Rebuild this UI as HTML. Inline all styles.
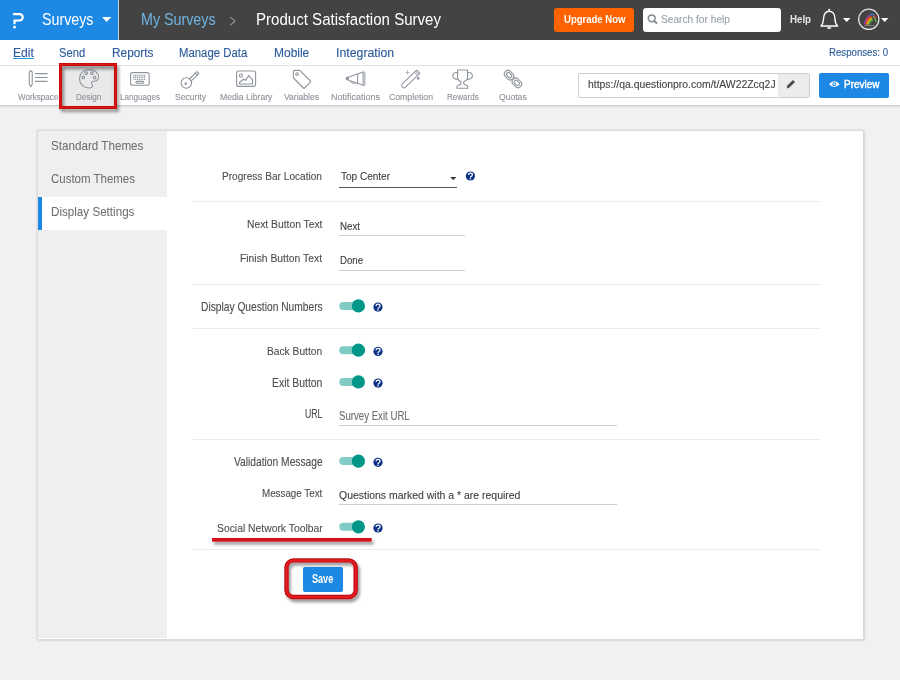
<!DOCTYPE html>
<html><head><meta charset="utf-8">
<style>
*{margin:0;padding:0;box-sizing:border-box}
html,body{width:900px;height:680px;overflow:hidden;background:#f1f1f1;font-family:"Liberation Sans",sans-serif}
body{position:relative}
.a{position:absolute}
.t{position:absolute;white-space:nowrap;transform-origin:0 0}
svg{position:absolute;left:0;top:0}
</style></head><body>
<!-- header -->
<div class="a" style="left:0;top:0;width:900px;height:40px;background:#434343"></div>
<div class="a" style="left:0;top:0;width:118px;height:40px;background:#1e88e5"></div>
<div class="a" style="left:118px;top:0;width:1px;height:40px;background:#c9d6e2"></div>
<div class="a" style="left:554px;top:8px;width:80px;height:24px;background:#ff6200;border-radius:3px"></div>
<div class="a" style="left:642.5px;top:8px;width:138.5px;height:24px;background:#fff;border-radius:3px"></div>
<!-- nav -->
<div class="a" style="left:0;top:40px;width:900px;height:26px;background:#fff;border-bottom:1px solid #e3e3e3"></div>
<div class="a" style="left:13px;top:58px;width:21px;height:1px;background:#1e9be0"></div>
<!-- toolbar -->
<div class="a" style="left:0;top:66px;width:900px;height:40px;background:#fff;border-bottom:1px solid #cdcdcd;box-shadow:0 1px 2px rgba(0,0,0,.1)"></div>
<div class="a" style="left:62px;top:66px;width:52px;height:40px;background:#e9e9e9;box-shadow:inset 0 3px 5px rgba(0,0,0,.12)"></div>
<div class="a" style="left:578px;top:72.5px;width:232px;height:25px;border:1px solid #cfcfcf;border-radius:2px;background:#fff"></div>
<div class="a" style="left:778px;top:73.5px;width:31px;height:23px;background:#ececec"></div>
<div class="a" style="left:818.5px;top:72.5px;width:70px;height:25px;background:#1e88e5;border-radius:2px"></div>
<!-- card -->
<div class="a" style="left:37px;top:130px;width:827px;height:510px;background:#fff;border:1px solid #dadada;box-shadow:0 0 2px rgba(0,0,0,.12),1px 1px 2px rgba(0,0,0,.08)"></div>
<div class="a" style="left:38px;top:131px;width:129px;height:507px;background:#efefef"></div>
<div class="a" style="left:38px;top:197px;width:129px;height:32.5px;background:#fff"></div>
<div class="a" style="left:38px;top:197px;width:4px;height:32.5px;background:#1e88e5"></div>
<!-- dividers -->
<div class="a" style="left:193px;top:201px;width:628px;height:1px;background:#ececec"></div>
<div class="a" style="left:193px;top:283.5px;width:628px;height:1px;background:#ececec"></div>
<div class="a" style="left:193px;top:328px;width:628px;height:1px;background:#ececec"></div>
<div class="a" style="left:193px;top:438.5px;width:628px;height:1px;background:#ececec"></div>
<div class="a" style="left:193px;top:549px;width:628px;height:1px;background:#ececec"></div>
<!-- field underlines -->
<div class="a" style="left:339px;top:186.8px;width:118px;height:1.5px;background:#555"></div>
<div class="a" style="left:339px;top:235px;width:125.5px;height:1px;background:#cfcfcf"></div>
<div class="a" style="left:339px;top:269.5px;width:125.5px;height:1px;background:#cfcfcf"></div>
<div class="a" style="left:339px;top:425px;width:278px;height:1px;background:#cfcfcf"></div>
<div class="a" style="left:339px;top:504px;width:278px;height:1px;background:#cfcfcf"></div>
<!-- save -->
<div class="a" style="left:302.5px;top:567px;width:40px;height:24.5px;background:#1e88e5;border-radius:2px"></div>

<div class="t" style="left:41.60px;top:10.00px;font-size:16.57px;line-height:19px;color:#ffffff;-webkit-text-stroke:0px currentColor;transform:scaleX(0.859);">Surveys</div>
<div class="t" style="left:140.70px;top:10.00px;font-size:16.57px;line-height:19px;color:#6fb5e6;-webkit-text-stroke:0px currentColor;transform:scaleX(0.862);">My Surveys</div>
<div class="t" style="left:256.20px;top:10.00px;font-size:16.13px;line-height:18px;color:#ffffff;-webkit-text-stroke:0px currentColor;transform:scaleX(0.935);">Product Satisfaction Survey</div>
<div class="t" style="left:563.60px;top:13.00px;font-size:10.97px;line-height:12px;color:#ffffff;font-weight:bold;-webkit-text-stroke:0px currentColor;transform:scaleX(0.868);">Upgrade Now</div>
<div class="t" style="left:661.00px;top:13.00px;font-size:10.97px;line-height:12px;color:#98a0a8;-webkit-text-stroke:0.12px currentColor;transform:scaleX(0.927);">Search for help</div>
<div class="t" style="left:790.00px;top:13.00px;font-size:10.97px;line-height:12px;color:#e6e6e6;font-weight:bold;-webkit-text-stroke:0px currentColor;transform:scaleX(0.883);">Help</div>
<div class="t" style="left:12.90px;top:46.00px;font-size:12.28px;line-height:14px;color:#2c5b9a;-webkit-text-stroke:0.12px currentColor;transform:scaleX(0.988);">Edit</div>
<div class="t" style="left:59.30px;top:46.00px;font-size:12.28px;line-height:14px;color:#2c5b9a;-webkit-text-stroke:0.12px currentColor;transform:scaleX(0.917);">Send</div>
<div class="t" style="left:111.80px;top:46.00px;font-size:12.28px;line-height:14px;color:#2c5b9a;-webkit-text-stroke:0.12px currentColor;transform:scaleX(0.965);">Reports</div>
<div class="t" style="left:178.90px;top:46.00px;font-size:12.28px;line-height:14px;color:#2c5b9a;-webkit-text-stroke:0.12px currentColor;transform:scaleX(0.926);">Manage Data</div>
<div class="t" style="left:273.60px;top:46.00px;font-size:12.28px;line-height:14px;color:#2c5b9a;-webkit-text-stroke:0.12px currentColor;transform:scaleX(0.976);">Mobile</div>
<div class="t" style="left:335.60px;top:46.00px;font-size:12.28px;line-height:14px;color:#2c5b9a;-webkit-text-stroke:0.12px currentColor;transform:scaleX(1.004);">Integration</div>
<div class="t" style="left:828.90px;top:46.00px;font-size:10.68px;line-height:12px;color:#2c5b9a;-webkit-text-stroke:0.12px currentColor;transform:scaleX(0.905);">Responses: 0</div>
<div class="t" style="left:17.60px;top:91.00px;font-size:9.52px;line-height:11px;color:#8c929a;-webkit-text-stroke:0.12px currentColor;transform:scaleX(0.852);">Workspace</div>
<div class="t" style="left:76.00px;top:91.00px;font-size:9.52px;line-height:11px;color:#8c929a;-webkit-text-stroke:0.12px currentColor;transform:scaleX(0.857);">Design</div>
<div class="t" style="left:119.60px;top:91.00px;font-size:9.52px;line-height:11px;color:#8c929a;-webkit-text-stroke:0.12px currentColor;transform:scaleX(0.849);">Languages</div>
<div class="t" style="left:174.60px;top:91.00px;font-size:9.52px;line-height:11px;color:#8c929a;-webkit-text-stroke:0.12px currentColor;transform:scaleX(0.901);">Security</div>
<div class="t" style="left:219.60px;top:91.00px;font-size:9.52px;line-height:11px;color:#8c929a;-webkit-text-stroke:0.12px currentColor;transform:scaleX(0.909);">Media Library</div>
<div class="t" style="left:284.00px;top:91.00px;font-size:9.52px;line-height:11px;color:#8c929a;-webkit-text-stroke:0.12px currentColor;transform:scaleX(0.898);">Variables</div>
<div class="t" style="left:331.10px;top:91.00px;font-size:9.52px;line-height:11px;color:#8c929a;-webkit-text-stroke:0.12px currentColor;transform:scaleX(0.943);">Notifications</div>
<div class="t" style="left:388.60px;top:91.00px;font-size:9.52px;line-height:11px;color:#8c929a;-webkit-text-stroke:0.12px currentColor;transform:scaleX(0.914);">Completion</div>
<div class="t" style="left:446.50px;top:91.00px;font-size:9.52px;line-height:11px;color:#8c929a;-webkit-text-stroke:0.12px currentColor;transform:scaleX(0.846);">Rewards</div>
<div class="t" style="left:499.00px;top:91.00px;font-size:9.52px;line-height:11px;color:#8c929a;-webkit-text-stroke:0.12px currentColor;transform:scaleX(0.902);">Quotas</div>
<div class="t" style="left:588.00px;top:78.00px;font-size:10.83px;line-height:12px;color:#444444;-webkit-text-stroke:0.12px currentColor;transform:scaleX(0.961);">https://qa.questionpro.com/t/AW22Zcq2J</div>
<div class="t" style="left:843.60px;top:78.00px;font-size:10.68px;line-height:12px;color:#ffffff;-webkit-text-stroke:0.45px currentColor;transform:scaleX(0.931);">Preview</div>
<div class="t" style="left:50.60px;top:138.00px;font-size:12.72px;line-height:15px;color:#6e6e6e;-webkit-text-stroke:0.05px currentColor;transform:scaleX(0.916);">Standard Themes</div>
<div class="t" style="left:50.60px;top:171.00px;font-size:12.72px;line-height:15px;color:#6e6e6e;-webkit-text-stroke:0.05px currentColor;transform:scaleX(0.902);">Custom Themes</div>
<div class="t" style="left:50.60px;top:204.00px;font-size:13.01px;line-height:15px;color:#6e6e6e;-webkit-text-stroke:0.05px currentColor;transform:scaleX(0.895);">Display Settings</div>
<div class="t" style="left:222.30px;top:170.00px;font-size:10.97px;line-height:12px;color:#4f4f4f;-webkit-text-stroke:0.12px currentColor;transform:scaleX(0.921);">Progress Bar Location</div>
<div class="t" style="left:246.80px;top:218.00px;font-size:10.97px;line-height:12px;color:#4f4f4f;-webkit-text-stroke:0.12px currentColor;transform:scaleX(0.940);">Next Button Text</div>
<div class="t" style="left:240.30px;top:252.00px;font-size:10.83px;line-height:12px;color:#4f4f4f;-webkit-text-stroke:0.12px currentColor;transform:scaleX(0.955);">Finish Button Text</div>
<div class="t" style="left:200.60px;top:300.00px;font-size:11.85px;line-height:14px;color:#4f4f4f;-webkit-text-stroke:0.12px currentColor;transform:scaleX(0.864);">Display Question Numbers</div>
<div class="t" style="left:267.20px;top:345.00px;font-size:11.41px;line-height:12px;color:#4f4f4f;-webkit-text-stroke:0.12px currentColor;transform:scaleX(0.896);">Back Button</div>
<div class="t" style="left:271.90px;top:376.00px;font-size:12.28px;line-height:14px;color:#4f4f4f;-webkit-text-stroke:0.12px currentColor;transform:scaleX(0.849);">Exit Button</div>
<div class="t" style="left:304.80px;top:407.00px;font-size:11.85px;line-height:14px;color:#4f4f4f;-webkit-text-stroke:0.12px currentColor;transform:scaleX(0.738);">URL</div>
<div class="t" style="left:233.60px;top:455.00px;font-size:12.43px;line-height:14px;color:#4f4f4f;-webkit-text-stroke:0.12px currentColor;transform:scaleX(0.825);">Validation Message</div>
<div class="t" style="left:262.00px;top:487.00px;font-size:11.12px;line-height:12px;color:#4f4f4f;-webkit-text-stroke:0.12px currentColor;transform:scaleX(0.882);">Message Text</div>
<div class="t" style="left:216.50px;top:522.00px;font-size:11.26px;line-height:12px;color:#4f4f4f;-webkit-text-stroke:0.12px currentColor;transform:scaleX(0.920);">Social Network Toolbar</div>
<div class="t" style="left:341.00px;top:170.00px;font-size:10.68px;line-height:12px;color:#3f3f3f;-webkit-text-stroke:0.12px currentColor;transform:scaleX(0.938);">Top Center</div>
<div class="t" style="left:339.80px;top:220.00px;font-size:10.68px;line-height:12px;color:#3f3f3f;-webkit-text-stroke:0.12px currentColor;transform:scaleX(0.915);">Next</div>
<div class="t" style="left:339.80px;top:255.00px;font-size:10.25px;line-height:11px;color:#3f3f3f;-webkit-text-stroke:0.12px currentColor;transform:scaleX(0.943);">Done</div>
<div class="t" style="left:339.30px;top:409.00px;font-size:12.43px;line-height:14px;color:#707070;-webkit-text-stroke:0.12px currentColor;transform:scaleX(0.776);">Survey Exit URL</div>
<div class="t" style="left:339.30px;top:489.00px;font-size:11.41px;line-height:12px;color:#3f3f3f;-webkit-text-stroke:0.12px currentColor;transform:scaleX(0.917);">Questions marked with a * are required</div>
<div class="t" style="left:311.70px;top:571.00px;font-size:12.86px;line-height:15px;color:#ffffff;font-weight:bold;-webkit-text-stroke:0px currentColor;transform:scaleX(0.706);">Save</div>

<svg width="900" height="680" viewBox="0 0 900 680">
<!-- logo -->
<g fill="none" stroke="#fff" stroke-width="2.2">
<path d="M13.1 14.2 H19.6 A3.15 3.15 0 0 1 19.6 20.5 H14.5 V24.3"/>
</g>
<circle cx="14.5" cy="27.2" r="1.4" fill="#fff"/>
<path d="M102 17 L111.3 17 L106.65 22 Z" fill="#fff"/>
<!-- breadcrumb > -->
<path d="M230.3 17.2 L235 21.2 L230.3 25.2" fill="none" stroke="#9a9a9a" stroke-width="1.1"/>
<!-- search -->
<circle cx="651.7" cy="18.3" r="3.4" fill="none" stroke="#7c8790" stroke-width="1.5"/>
<path d="M654.2 20.8 L657 23.6" stroke="#7c8790" stroke-width="1.8"/>
<!-- bell -->
<path d="M821 26 C823 24 823.5 22 823.5 19 C823.5 14 826 11.2 829.2 11.2 C832.4 11.2 835 14 835 19 C835 22 835.5 24 837.6 26 Z" fill="none" stroke="#fff" stroke-width="1.4" stroke-linejoin="round"/>
<circle cx="829.2" cy="9.8" r="1" fill="#fff"/>
<path d="M827 27.2 A2.2 1.8 0 0 0 831.4 27.2 Z" fill="#fff"/>
<path d="M843 18 L850.4 18 L846.7 22 Z" fill="#fff"/>
<!-- avatar -->
<circle cx="868.8" cy="19.3" r="10.1" fill="none" stroke="#e0e0e0" stroke-width="1.3"/>
<g fill="none" stroke-width="1.3" stroke-linecap="round">
<path d="M864.6 23.8 Q865.6 17.6 870.4 15" stroke="#8e44ad"/>
<path d="M865.7 24 Q866.6 18.6 870.9 16.3" stroke="#e53935"/>
<path d="M866.8 24.2 Q867.7 19.8 871.4 17.6" stroke="#fb8c00"/>
<path d="M867.9 24.2 Q868.8 21 872 19" stroke="#c0ca33"/>
<path d="M869.2 24.2 Q870 22 872.4 20.4" stroke="#43a047"/>
<path d="M870.6 14.4 Q873 13.4 874.4 15.2" stroke="#1e88e5"/>
<path d="M873.4 16.2 Q875.3 18 876 21.6" stroke="#7cb342"/>
<path d="M874.2 15.4 Q875.2 16.2 875.6 17" stroke="#d81b60"/>
</g>
<path d="M864.5 25.6 H874.5" stroke="#8a8a8a" stroke-width="0.9"/>
<path d="M881 18 L888.4 18 L884.7 22 Z" fill="#fff"/>

<!-- toolbar icons -->
<g fill="none" stroke="#8f959d" stroke-width="1.1" stroke-linejoin="round" stroke-linecap="round">
<!-- workspace -->
<path d="M29.3 72 Q30.75 69.8 32.2 72 V84.2 L30.75 86.8 L29.3 84.2 Z"/>
<path d="M35.4 73.6 H47.2 M35.4 77.5 H47.2 M35.4 81.4 H47.2"/>
<!-- design palette -->
<path d="M89 69.6 C94.5 69.6 98.6 72.8 98.6 77.2 C98.6 80.5 95.6 81.4 93.5 81.2 C91.7 81 91 82.4 92 84 C93.2 85.8 92.4 88 89.6 88 C83.6 88 79.5 84 79.5 78.8 C79.5 73.4 83.6 69.6 89 69.6 Z"/>
<circle cx="86.2" cy="73.2" r="1.3"/><circle cx="91.9" cy="73.2" r="1.3"/>
<circle cx="83.3" cy="77.4" r="1.3"/><circle cx="94.6" cy="77.6" r="1.3"/>
<!-- keyboard -->
<rect x="130.6" y="72.6" width="18.6" height="12.6" rx="2"/>
<path d="M133.3 75.5 H146 M133.3 77.4 H146 M133.3 79.3 H146" stroke-dasharray="1.1 0.7" stroke-width="1.3" stroke-linecap="butt"/>
<rect x="136" y="81.4" width="7.6" height="1.9" rx="0.9"/>
<!-- key -->
<circle cx="186.3" cy="83" r="5.2"/>
<circle cx="185.8" cy="83.6" r="0.8"/>
<path d="M189.5 79 L196.8 71.6 L198.9 73.6 L191.2 80.8"/>
<path d="M195.2 73.3 L197.3 75.3"/>
<!-- image -->
<rect x="236.6" y="71" width="19" height="15.4" rx="2"/>
<circle cx="241" cy="75.6" r="1.6"/>
<path d="M239.6 84 V82.3 L243.8 79 L245.3 80.4 L248.8 75.6 L252.6 79.8 V84 Z"/>
<!-- tag -->
<path d="M293.4 71.6 Q293.4 70.4 294.6 70.4 H299.8 L310.4 81 Q311 81.6 310.4 82.2 L304.6 88 Q304 88.6 303.4 88 L293.4 78 Z"/>
<circle cx="297" cy="74" r="1.3"/>
<!-- megaphone -->
<path d="M347.2 77.4 L364 71.8 V85.6 L347.2 79.8 Z"/>
<path d="M357.6 74.2 V83.2"/>
<path d="M363 72.6 V84.8 M364.8 72.6 V84.8" stroke-width="1.4" stroke="#b5bac0"/>
<circle cx="347.4" cy="78.6" r="1.2" fill="#8f959d"/>
<path d="M349.4 80.6 L352.8 83.2 L355.2 83.2" stroke="#a5abb2"/>
<!-- wand -->
<path d="M402 84.2 L416.6 70.2 L419.8 73.4 L405.2 87.4 Q404 88.4 402.8 87.4 L402 86.6 Q401.2 85.4 402 84.2 Z"/>
<path d="M414.4 72.3 L417.6 75.5 M415.5 71.2 L418.7 74.4" stroke-width="0.9"/>
<path d="M407.5 70.6 V74.4 M405.6 72.5 H409.4" stroke="#b0b5bb" stroke-width="0.9"/>
<circle cx="418.2" cy="78.4" r="0.8" fill="#a5abb2"/>
<!-- trophy -->
<path d="M457.6 70 H467.6 V76.8 C467.6 79.4 465.4 81.2 463.8 81.6 V83.2 Q463.8 85 466.6 85.2 Q467.8 85.4 467.8 86.8 V88.2 H456.9 V86.8 Q456.9 85.4 458.1 85.2 Q461 85 461 83.2 V81.6 C459.4 81.2 457.6 79.4 457.6 76.8 Z"/>
<path d="M457.6 72.6 C453.8 72 452.2 74.4 453 76.8 C453.6 78.6 455.6 79.4 458.2 79.2"/>
<path d="M467.6 72.6 C471.4 72 473 74.4 472.2 76.8 C471.6 78.6 469.6 79.4 467 79.2"/>
<!-- chain -->
<g transform="rotate(-45 513 79)">
<rect x="509.4" y="68.4" width="7.2" height="10.2" rx="3.4"/>
<rect x="509.4" y="79.4" width="7.2" height="10.2" rx="3.4"/>
<rect x="511.2" y="70.6" width="3.6" height="5.8" rx="1.6"/>
<rect x="511.2" y="81.6" width="3.6" height="5.8" rx="1.6"/>
</g>
</g>
<path d="M450.1 177.1 H456.4 L453.25 180 Z" fill="#333"/>
<!-- url pencil -->
<path d="M786.6 88.4 L787.4 85.6 L793 80 L795 82 L789.4 87.6 Z" fill="#4a4a4a"/>
<!-- eye -->
<path d="M829 84.2 Q834.3 78.4 839.6 84.2 Q834.3 90 829 84.2 Z" fill="#fff"/>
<circle cx="834.3" cy="84.2" r="1.9" fill="#1e88e5"/>
<circle cx="834.3" cy="84.2" r="0.9" fill="#fff"/>
<!-- red boxes -->
<defs>
<filter id="sh" x="-30%" y="-60%" width="160%" height="300%">
<feGaussianBlur in="SourceAlpha" stdDeviation="1.8"/>
<feOffset dx="1.5" dy="2.5" result="b"/>
<feComponentTransfer><feFuncA type="linear" slope="0.4"/></feComponentTransfer>
<feMerge><feMergeNode/><feMergeNode in="SourceGraphic"/></feMerge>
</filter>
</defs>
<g filter="url(#sh)">
<rect x="60.5" y="64.5" width="55" height="43" fill="none" stroke="#c40a0e" stroke-width="3"/>
<rect x="60.5" y="64.5" width="55" height="43" fill="none" stroke="#dc1216" stroke-width="1.2"/>
</g>
<g filter="url(#sh)">
<rect x="212" y="538" width="159.5" height="3.6" fill="#c90b10"/>
<rect x="212" y="538.8" width="159.5" height="1.6" fill="#e0161b"/>
</g>
<g filter="url(#sh)">
<rect x="286.5" y="560.4" width="69.2" height="36.6" rx="7" fill="none" stroke="#b80a10" stroke-width="4.4"/>
<rect x="286.5" y="560.4" width="69.2" height="36.6" rx="7" fill="none" stroke="#ea1f24" stroke-width="2"/>
</g>
<!-- toggles -->
<g id="tg">
</g>
</svg>
<svg width="900" height="680" viewBox="0 0 900 680">
<circle cx="470.4" cy="176" r="4.6" fill="#0b3285"/>
<path d="M468.5 174.9 Q468.5 173 470.4 173 Q472.4 173 472.4 174.7 Q472.4 175.8 471.2 176.4 Q470.4 176.8 470.4 177.6" fill="none" stroke="#fff" stroke-width="1.25"/>
<rect x="469.7" y="178.2" width="1.4" height="1.3" fill="#fff"/>
<rect x="339.3" y="301.9" width="22" height="8" rx="4" fill="#80cbc4"/>
<circle cx="358.4" cy="305.9" r="6.6" fill="#009688"/>
<circle cx="378" cy="307.1" r="4.6" fill="#0b3285"/>
<path d="M376.1 306.0 Q376.1 304.1 378 304.1 Q380 304.1 380 305.8 Q380 306.90000000000003 378.8 307.5 Q378 307.90000000000003 378 308.70000000000005" fill="none" stroke="#fff" stroke-width="1.25"/>
<rect x="377.3" y="309.3" width="1.4" height="1.3" fill="#fff"/>
<rect x="339.3" y="346.2" width="22" height="8" rx="4" fill="#80cbc4"/>
<circle cx="358.4" cy="350.2" r="6.6" fill="#009688"/>
<circle cx="378" cy="351.40000000000003" r="4.6" fill="#0b3285"/>
<path d="M376.1 350.3 Q376.1 348.40000000000003 378 348.40000000000003 Q380 348.40000000000003 380 350.1 Q380 351.20000000000005 378.8 351.8 Q378 352.20000000000005 378 353.00000000000006" fill="none" stroke="#fff" stroke-width="1.25"/>
<rect x="377.3" y="353.6" width="1.4" height="1.3" fill="#fff"/>
<rect x="339.3" y="377.9" width="22" height="8" rx="4" fill="#80cbc4"/>
<circle cx="358.4" cy="381.9" r="6.6" fill="#009688"/>
<circle cx="378" cy="383.1" r="4.6" fill="#0b3285"/>
<path d="M376.1 382.0 Q376.1 380.1 378 380.1 Q380 380.1 380 381.8 Q380 382.90000000000003 378.8 383.5 Q378 383.90000000000003 378 384.70000000000005" fill="none" stroke="#fff" stroke-width="1.25"/>
<rect x="377.3" y="385.3" width="1.4" height="1.3" fill="#fff"/>
<rect x="339.3" y="457.09999999999997" width="22" height="8" rx="4" fill="#80cbc4"/>
<circle cx="358.4" cy="461.09999999999997" r="6.6" fill="#009688"/>
<circle cx="378" cy="462.3" r="4.6" fill="#0b3285"/>
<path d="M376.1 461.2 Q376.1 459.3 378 459.3 Q380 459.3 380 461.0 Q380 462.1 378.8 462.7 Q378 463.1 378 463.90000000000003" fill="none" stroke="#fff" stroke-width="1.25"/>
<rect x="377.3" y="464.5" width="1.4" height="1.3" fill="#fff"/>
<rect x="339.3" y="522.8" width="22" height="8" rx="4" fill="#80cbc4"/>
<circle cx="358.4" cy="526.8" r="6.6" fill="#009688"/>
<circle cx="378" cy="528.0" r="4.6" fill="#0b3285"/>
<path d="M376.1 526.9 Q376.1 525.0 378 525.0 Q380 525.0 380 526.7 Q380 527.8 378.8 528.4 Q378 528.8 378 529.6" fill="none" stroke="#fff" stroke-width="1.25"/>
<rect x="377.3" y="530.2" width="1.4" height="1.3" fill="#fff"/>
</svg>
</body></html>
